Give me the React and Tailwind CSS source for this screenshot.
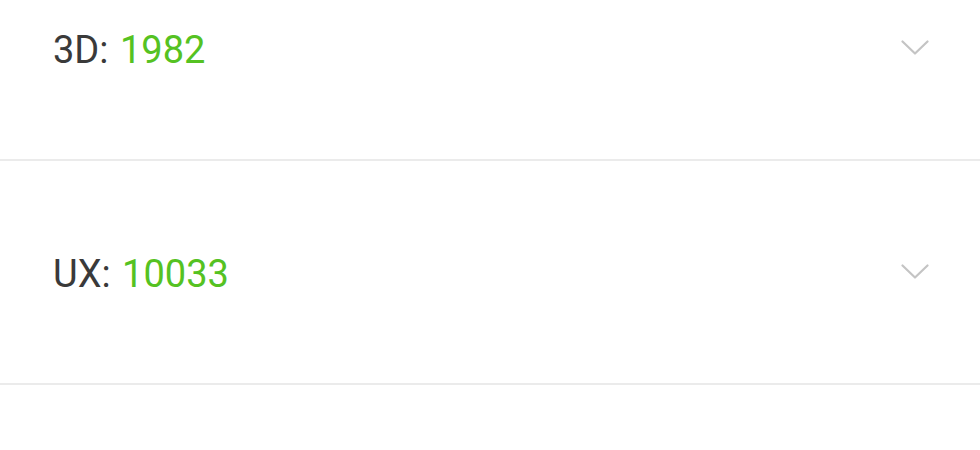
import React from "react";

function Chevron() {
  return (
    <svg width="28" height="16" viewBox="0 0 28 16" fill="none">
      <path d="M1.5 1.5 L14 13.5 L26.5 1.5" stroke="#c4c4c4" strokeWidth="2.2" strokeLinecap="round" strokeLinejoin="round" />
    </svg>
  );
}

function Row({ label, value }) {
  return (
    <div className="flex h-[224px] items-center justify-between border-b-2 border-[#ebebeb] pl-[53px] pr-[51px]">
      <div className="pt-[4px] text-[38px] leading-none text-[#3a3a3a]">
        {label}: <span className="ml-[2px] text-[#55c222]">{value}</span>
      </div>
      <Chevron />
    </div>
  );
}

export default function App() {
  return (
    <div className="h-[450px] w-[980px] overflow-hidden bg-white" style={{ fontFamily: "Roboto, 'Noto Sans', sans-serif" }}>
      <div className="-mt-[63px]">
        <Row label="3D" value="1982" />
        <Row label="UX" value="10033" />
      </div>
    </div>
  );
}
